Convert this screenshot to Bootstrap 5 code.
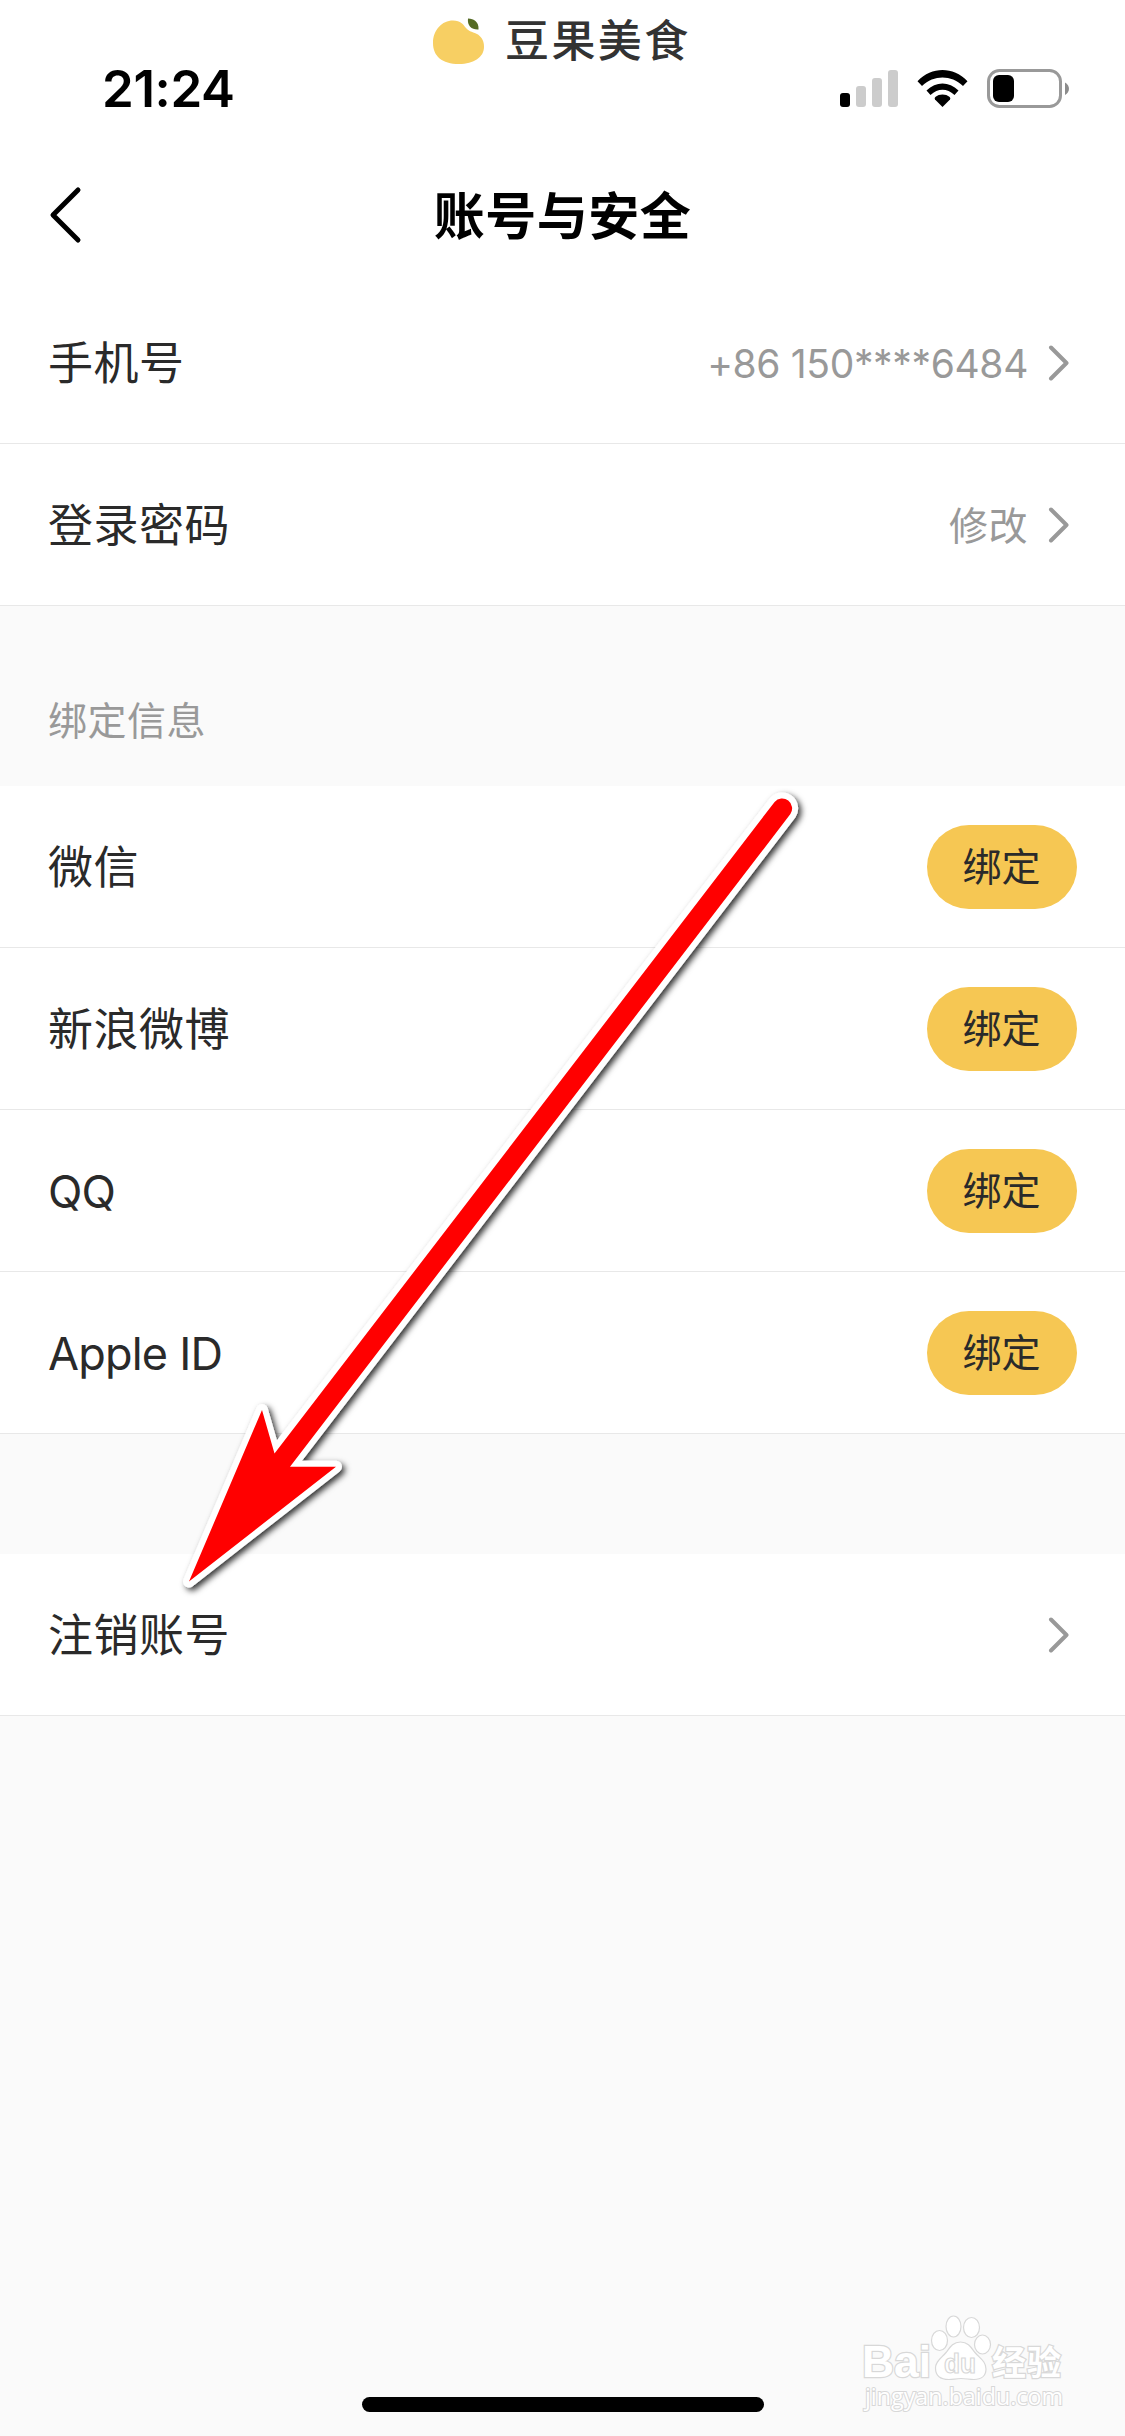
<!DOCTYPE html>
<html lang="zh-CN">
<head>
<meta charset="utf-8">
<meta name="viewport" content="width=device-width, initial-scale=1">
<title>账号与安全</title>
<link href="https://cdn.jsdelivr.net/npm/bootstrap@5.3.0/dist/css/bootstrap.min.css" rel="stylesheet">
<style>
  body { background: #fafafa; color: #2a2a2a; font-family: Inter, "Noto Sans CJK SC", sans-serif; font-size: 45px; line-height: 1; min-height: 2436px; overflow-x: hidden; }
  .status-bar { height: 150px; }
  .clock { padding-left: 102px; padding-top: 63px; font-size: 51px; font-weight: 600; color: #000; letter-spacing: -.4px; }
  .brand-mark { left: 433px; top: 17px; }
  .brand-name { font-size: 44px; font-weight: 500; color: #333; letter-spacing: 2.4px; margin-left: 20px; }
  .status-icons { left: 840px; top: 66px; }
  .title-bar { height: 132px; }
  .title-text { font-size: 51px; font-weight: 700; color: #000; letter-spacing: .5px; padding-top: 1px; }
  .back-btn { left: 47px; top: 34px; }
  .cell { height: 162px; padding: 0 48px; border: 0; border-bottom: 1px solid #e8e8e8; color: #2a2a2a; background: #fff; }
  .cell-name { letter-spacing: .5px; padding-top: 2px; }
  .cell-latin { letter-spacing: -.8px; }
  .cell-value { font-size: 39px; color: #999; letter-spacing: .5px; padding-top: 1px; }
  .phone { letter-spacing: -.35px; }
  .arrow-cell { padding-right: 55px; }
  .chevron { margin-left: 20px; }
  .bind-btn { width: 150px; height: 84px; padding: 0 1px 0 0; font-size: 39px; line-height: 1; color: #2a2a2a; background: #f6c753; border: 0; }
  .section-label { height: 180px; padding: 48px 48px 0; font-size: 39px; color: #999; letter-spacing: .5px; }
  .section-gap { height: 120px; }
  .home-bar { left: 362px; top: 2397px; width: 402px; height: 15px; background: #000; }
  .pointer-arrow { left: 0; top: 0; pointer-events: none; }
  .watermark { left: 855px; top: 2305px; overflow: visible; }
</style>
</head>
<body class="position-relative">
<header class="bg-white">
  <div class="status-bar position-relative">
    <div class="clock">21:24</div>
    <div class="brand-mark position-absolute d-flex align-items-center">
      <svg width="52" height="48" viewBox="0 0 52 48"><path fill="#f7cf63" d="M0 26C0 13 9 3.500 20 3.500c8 0 10 4 13 7.500 3 4 8 4 12 6.500 4 3 6 6.500 6 12.500C51 40 41 47 26 47 9 47 0 39 0 26Z"/><path fill="#556b24" d="M35 1.500c6 .5 11 3 10.500 11C39 13 34 9 35 1.500Z"/></svg>
      <span class="brand-name text-nowrap">豆果美食</span>
    </div>
    <svg class="status-icons position-absolute" width="232" height="45" viewBox="0 0 232 45">
      <rect x="0" y="27" width="10" height="14" rx="3"/>
      <g fill="#ccc"><rect x="16" y="20" width="10" height="21" rx="3"/><rect x="32" y="12" width="10" height="29" rx="3"/><rect x="48" y="4" width="10" height="37" rx="3"/></g>
      <path d="M102.500 41 95 33.500a2 2 0 0 1 .3-2.500c4-3.300 10.400-3.300 14.400 0a2 2 0 0 1 .3 2.500Z"/>
      <path d="M90.500 29 86.500 24.500C96 15 109 15 118.500 24.500L114.500 29C107 22 98 22 90.500 29Z"/>
      <path d="M82 20 77.500 15.200C92 .3 113 .3 127.500 15.200L123 20C111 8.800 94 8.800 82 20Z"/>
      <rect x="148.500" y="4.500" width="72" height="36" rx="11" fill="none" stroke="#999" stroke-width="3"/>
      <rect x="153" y="9" width="21" height="27" rx="6"/>
      <path fill="#8c8c8c" d="M225 16.500c5.300 2.500 5.300 10 0 12.500Z"/>
    </svg>
  </div>
  <nav class="title-bar position-relative d-flex justify-content-center align-items-center">
    <svg class="back-btn position-absolute" width="40" height="64" viewBox="0 0 40 64" fill="none" stroke="#000" stroke-width="5" stroke-linecap="round" stroke-linejoin="round"><path d="M31 6 6 31 31 56"/></svg>
    <h1 class="title-text m-0">账号与安全</h1>
  </nav>
</header>
<main>
  <div class="list-group list-group-flush rounded-0">
    <div class="cell arrow-cell d-flex align-items-center"><span class="cell-name me-auto">手机号</span><span class="cell-value phone">+86 150****6484</span><svg class="chevron" width="22" height="36" viewBox="0 0 22 36" fill="none" stroke="#999" stroke-width="4" stroke-linecap="round" stroke-linejoin="round"><path d="M3 2.500 18.500 18 3 33.500"/></svg></div>
    <div class="cell arrow-cell d-flex align-items-center"><span class="cell-name me-auto">登录密码</span><span class="cell-value">修改</span><svg class="chevron" width="22" height="36" viewBox="0 0 22 36" fill="none" stroke="#999" stroke-width="4" stroke-linecap="round" stroke-linejoin="round"><path d="M3 2.500 18.500 18 3 33.500"/></svg></div>
  </div>
  <div class="section-label d-flex align-items-center">绑定信息</div>
  <div class="list-group list-group-flush rounded-0">
    <div class="cell d-flex align-items-center justify-content-between"><span class="cell-name">微信</span><button class="btn bind-btn rounded-pill">绑定</button></div>
    <div class="cell d-flex align-items-center justify-content-between"><span class="cell-name">新浪微博</span><button class="btn bind-btn rounded-pill">绑定</button></div>
    <div class="cell d-flex align-items-center justify-content-between"><span class="cell-name cell-latin">QQ</span><button class="btn bind-btn rounded-pill">绑定</button></div>
    <div class="cell d-flex align-items-center justify-content-between"><span class="cell-name cell-latin">Apple ID</span><button class="btn bind-btn rounded-pill">绑定</button></div>
  </div>
  <div class="section-gap"></div>
  <div class="cell arrow-cell d-flex align-items-center justify-content-between"><span class="cell-name">注销账号</span><svg class="chevron" width="22" height="36" viewBox="0 0 22 36" fill="none" stroke="#999" stroke-width="4" stroke-linecap="round" stroke-linejoin="round"><path d="M3 2.500 18.500 18 3 33.500"/></svg></div>
</main>

<svg class="pointer-arrow position-absolute" width="1125" height="1700" viewBox="0 0 1125 1700">
  <defs>
    <path id="arrow" d="M189 1581.500 262 1410 274.500 1453.500 774.600 801.900A10 10 0 0 1 790.400 814.100L290 1466.700H336Z"/>
    <filter id="soft" x="-10%" y="-10%" width="120%" height="120%"><feDropShadow dx="3" dy="3" stdDeviation="3" flood-color="#000" flood-opacity=".8"/></filter>
  </defs>
  <use href="#arrow" fill="#fff" stroke="#fff" stroke-width="12" stroke-linejoin="round" filter="url(#soft)"/>
  <use href="#arrow" fill="#f00"/>
</svg>

<svg class="watermark position-absolute" width="220" height="120" viewBox="0 0 220 120" fill="#fff" stroke="#d8d8d8" stroke-width="1.200">
  <g stroke-width="2.400" paint-order="stroke">
    <text x="7" y="72" font-family="Liberation Sans, sans-serif" font-weight="700" font-size="44" textLength="69" lengthAdjust="spacingAndGlyphs">Bai</text>
    <text x="137" y="70" font-family="Noto Sans CJK SC, sans-serif" font-weight="700" font-size="34" textLength="69">经验</text>
    <text x="10" y="100" font-family="Open Sans, sans-serif" font-size="23" stroke-width="2" textLength="198" lengthAdjust="spacingAndGlyphs">jingyan.baidu.com</text>
  </g>
  <ellipse cx="84.500" cy="35.500" rx="8" ry="10"/><ellipse cx="98.500" cy="21.500" rx="7.500" ry="10.500"/><ellipse cx="116.500" cy="22.500" rx="8" ry="10"/><ellipse cx="127.500" cy="39.500" rx="8" ry="9.500"/>
  <path d="M105.500 37c8 0 11 6 14 10 5 6 11.500 9 11.500 17 0 7-5 10.500-12 10.500-5 0-8-1-13-1s-8 1-12 1C86 74.500 80.500 71 80.500 63c0-7 6-10 11-16 3-4 6-10 14-10Z"/>
  <text x="89" y="68" font-family="Liberation Sans, sans-serif" font-weight="700" font-size="27" textLength="32" lengthAdjust="spacingAndGlyphs">du</text>
</svg>
<div class="home-bar position-absolute rounded-pill"></div>
<script src="https://cdn.jsdelivr.net/npm/bootstrap@5.3.0/dist/js/bootstrap.bundle.min.js"></script>
</body>
</html>
